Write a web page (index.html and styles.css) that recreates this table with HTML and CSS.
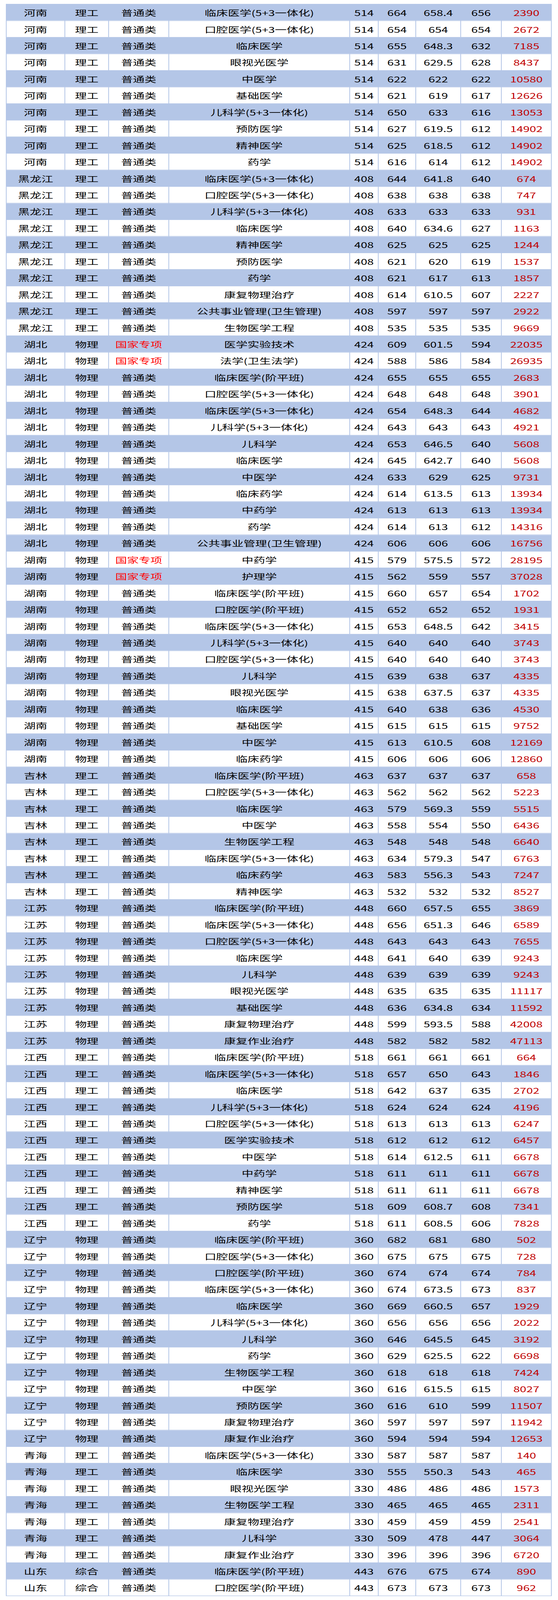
FILE: index.html
```html
<!DOCTYPE html>
<html lang="zh-CN">
<head>
<meta charset="utf-8">
<title>录取分数</title>
<link rel="stylesheet" href="styles.css">
</head>
<body>
<div class="frame">
<div class="page">
<table class="score-table">
<colgroup>
<col class="c-prov"><col class="c-type"><col class="c-cat"><col class="c-major"><col class="c-line"><col class="c-max"><col class="c-avg"><col class="c-min"><col class="c-rank">
</colgroup>
<tbody>
<tr><td>河南</td><td>理工</td><td>普通类</td><td>临床医学(5+3一体化)</td><td>514</td><td>664</td><td>658.4</td><td>656</td><td class="rank">2390</td></tr>
<tr><td>河南</td><td>理工</td><td>普通类</td><td>口腔医学(5+3一体化)</td><td>514</td><td>654</td><td>654</td><td>654</td><td class="rank">2672</td></tr>
<tr><td>河南</td><td>理工</td><td>普通类</td><td>临床医学</td><td>514</td><td>655</td><td>648.3</td><td>632</td><td class="rank">7185</td></tr>
<tr><td>河南</td><td>理工</td><td>普通类</td><td>眼视光医学</td><td>514</td><td>631</td><td>629.5</td><td>628</td><td class="rank">8437</td></tr>
<tr><td>河南</td><td>理工</td><td>普通类</td><td>中医学</td><td>514</td><td>622</td><td>622</td><td>622</td><td class="rank">10580</td></tr>
<tr><td>河南</td><td>理工</td><td>普通类</td><td>基础医学</td><td>514</td><td>621</td><td>619</td><td>617</td><td class="rank">12626</td></tr>
<tr><td>河南</td><td>理工</td><td>普通类</td><td>儿科学(5+3一体化)</td><td>514</td><td>650</td><td>633</td><td>616</td><td class="rank">13053</td></tr>
<tr><td>河南</td><td>理工</td><td>普通类</td><td>预防医学</td><td>514</td><td>627</td><td>619.5</td><td>612</td><td class="rank">14902</td></tr>
<tr><td>河南</td><td>理工</td><td>普通类</td><td>精神医学</td><td>514</td><td>625</td><td>618.5</td><td>612</td><td class="rank">14902</td></tr>
<tr><td>河南</td><td>理工</td><td>普通类</td><td>药学</td><td>514</td><td>616</td><td>614</td><td>612</td><td class="rank">14902</td></tr>
<tr><td>黑龙江</td><td>理工</td><td>普通类</td><td>临床医学(5+3一体化)</td><td>408</td><td>644</td><td>641.8</td><td>640</td><td class="rank">674</td></tr>
<tr><td>黑龙江</td><td>理工</td><td>普通类</td><td>口腔医学(5+3一体化)</td><td>408</td><td>638</td><td>638</td><td>638</td><td class="rank">747</td></tr>
<tr><td>黑龙江</td><td>理工</td><td>普通类</td><td>儿科学(5+3一体化)</td><td>408</td><td>633</td><td>633</td><td>633</td><td class="rank">931</td></tr>
<tr><td>黑龙江</td><td>理工</td><td>普通类</td><td>临床医学</td><td>408</td><td>640</td><td>634.6</td><td>627</td><td class="rank">1163</td></tr>
<tr><td>黑龙江</td><td>理工</td><td>普通类</td><td>精神医学</td><td>408</td><td>625</td><td>625</td><td>625</td><td class="rank">1244</td></tr>
<tr><td>黑龙江</td><td>理工</td><td>普通类</td><td>预防医学</td><td>408</td><td>621</td><td>620</td><td>619</td><td class="rank">1537</td></tr>
<tr><td>黑龙江</td><td>理工</td><td>普通类</td><td>药学</td><td>408</td><td>621</td><td>617</td><td>613</td><td class="rank">1857</td></tr>
<tr><td>黑龙江</td><td>理工</td><td>普通类</td><td>康复物理治疗</td><td>408</td><td>614</td><td>610.5</td><td>607</td><td class="rank">2227</td></tr>
<tr><td>黑龙江</td><td>理工</td><td>普通类</td><td>公共事业管理(卫生管理)</td><td>408</td><td>597</td><td>597</td><td>597</td><td class="rank">2922</td></tr>
<tr><td>黑龙江</td><td>理工</td><td>普通类</td><td>生物医学工程</td><td>408</td><td>535</td><td>535</td><td>535</td><td class="rank">9669</td></tr>
<tr><td>湖北</td><td>物理</td><td class="special">国家专项</td><td>医学实验技术</td><td>424</td><td>609</td><td>601.5</td><td>594</td><td class="rank">22035</td></tr>
<tr><td>湖北</td><td>物理</td><td class="special">国家专项</td><td>法学(卫生法学)</td><td>424</td><td>588</td><td>586</td><td>584</td><td class="rank">26935</td></tr>
<tr><td>湖北</td><td>物理</td><td>普通类</td><td>临床医学(阶平班)</td><td>424</td><td>655</td><td>655</td><td>655</td><td class="rank">2683</td></tr>
<tr><td>湖北</td><td>物理</td><td>普通类</td><td>口腔医学(5+3一体化)</td><td>424</td><td>648</td><td>648</td><td>648</td><td class="rank">3901</td></tr>
<tr><td>湖北</td><td>物理</td><td>普通类</td><td>临床医学(5+3一体化)</td><td>424</td><td>654</td><td>648.3</td><td>644</td><td class="rank">4682</td></tr>
<tr><td>湖北</td><td>物理</td><td>普通类</td><td>儿科学(5+3一体化)</td><td>424</td><td>643</td><td>643</td><td>643</td><td class="rank">4921</td></tr>
<tr><td>湖北</td><td>物理</td><td>普通类</td><td>儿科学</td><td>424</td><td>653</td><td>646.5</td><td>640</td><td class="rank">5608</td></tr>
<tr><td>湖北</td><td>物理</td><td>普通类</td><td>临床医学</td><td>424</td><td>645</td><td>642.7</td><td>640</td><td class="rank">5608</td></tr>
<tr><td>湖北</td><td>物理</td><td>普通类</td><td>中医学</td><td>424</td><td>633</td><td>629</td><td>625</td><td class="rank">9731</td></tr>
<tr><td>湖北</td><td>物理</td><td>普通类</td><td>临床药学</td><td>424</td><td>614</td><td>613.5</td><td>613</td><td class="rank">13934</td></tr>
<tr><td>湖北</td><td>物理</td><td>普通类</td><td>中药学</td><td>424</td><td>613</td><td>613</td><td>613</td><td class="rank">13934</td></tr>
<tr><td>湖北</td><td>物理</td><td>普通类</td><td>药学</td><td>424</td><td>614</td><td>613</td><td>612</td><td class="rank">14316</td></tr>
<tr><td>湖北</td><td>物理</td><td>普通类</td><td>公共事业管理(卫生管理)</td><td>424</td><td>606</td><td>606</td><td>606</td><td class="rank">16756</td></tr>
<tr><td>湖南</td><td>物理</td><td class="special">国家专项</td><td>中药学</td><td>415</td><td>579</td><td>575.5</td><td>572</td><td class="rank">28195</td></tr>
<tr><td>湖南</td><td>物理</td><td class="special">国家专项</td><td>护理学</td><td>415</td><td>562</td><td>559</td><td>557</td><td class="rank">37028</td></tr>
<tr><td>湖南</td><td>物理</td><td>普通类</td><td>临床医学(阶平班)</td><td>415</td><td>660</td><td>657</td><td>654</td><td class="rank">1702</td></tr>
<tr><td>湖南</td><td>物理</td><td>普通类</td><td>口腔医学(阶平班)</td><td>415</td><td>652</td><td>652</td><td>652</td><td class="rank">1931</td></tr>
<tr><td>湖南</td><td>物理</td><td>普通类</td><td>临床医学(5+3一体化)</td><td>415</td><td>653</td><td>648.5</td><td>642</td><td class="rank">3415</td></tr>
<tr><td>湖南</td><td>物理</td><td>普通类</td><td>儿科学(5+3一体化)</td><td>415</td><td>640</td><td>640</td><td>640</td><td class="rank">3743</td></tr>
<tr><td>湖南</td><td>物理</td><td>普通类</td><td>口腔医学(5+3一体化)</td><td>415</td><td>640</td><td>640</td><td>640</td><td class="rank">3743</td></tr>
<tr><td>湖南</td><td>物理</td><td>普通类</td><td>儿科学</td><td>415</td><td>639</td><td>638</td><td>637</td><td class="rank">4335</td></tr>
<tr><td>湖南</td><td>物理</td><td>普通类</td><td>眼视光医学</td><td>415</td><td>638</td><td>637.5</td><td>637</td><td class="rank">4335</td></tr>
<tr><td>湖南</td><td>物理</td><td>普通类</td><td>临床医学</td><td>415</td><td>640</td><td>638</td><td>636</td><td class="rank">4530</td></tr>
<tr><td>湖南</td><td>物理</td><td>普通类</td><td>基础医学</td><td>415</td><td>615</td><td>615</td><td>615</td><td class="rank">9752</td></tr>
<tr><td>湖南</td><td>物理</td><td>普通类</td><td>中医学</td><td>415</td><td>613</td><td>610.5</td><td>608</td><td class="rank">12169</td></tr>
<tr><td>湖南</td><td>物理</td><td>普通类</td><td>临床药学</td><td>415</td><td>606</td><td>606</td><td>606</td><td class="rank">12860</td></tr>
<tr><td>吉林</td><td>理工</td><td>普通类</td><td>临床医学(阶平班)</td><td>463</td><td>637</td><td>637</td><td>637</td><td class="rank">658</td></tr>
<tr><td>吉林</td><td>理工</td><td>普通类</td><td>口腔医学(5+3一体化)</td><td>463</td><td>562</td><td>562</td><td>562</td><td class="rank">5223</td></tr>
<tr><td>吉林</td><td>理工</td><td>普通类</td><td>临床医学</td><td>463</td><td>579</td><td>569.3</td><td>559</td><td class="rank">5515</td></tr>
<tr><td>吉林</td><td>理工</td><td>普通类</td><td>中医学</td><td>463</td><td>558</td><td>554</td><td>550</td><td class="rank">6436</td></tr>
<tr><td>吉林</td><td>理工</td><td>普通类</td><td>生物医学工程</td><td>463</td><td>548</td><td>548</td><td>548</td><td class="rank">6640</td></tr>
<tr><td>吉林</td><td>理工</td><td>普通类</td><td>临床医学(5+3一体化)</td><td>463</td><td>634</td><td>579.3</td><td>547</td><td class="rank">6763</td></tr>
<tr><td>吉林</td><td>理工</td><td>普通类</td><td>临床药学</td><td>463</td><td>583</td><td>556.3</td><td>543</td><td class="rank">7247</td></tr>
<tr><td>吉林</td><td>理工</td><td>普通类</td><td>精神医学</td><td>463</td><td>532</td><td>532</td><td>532</td><td class="rank">8527</td></tr>
<tr><td>江苏</td><td>物理</td><td>普通类</td><td>临床医学(阶平班)</td><td>448</td><td>660</td><td>657.5</td><td>655</td><td class="rank">3869</td></tr>
<tr><td>江苏</td><td>物理</td><td>普通类</td><td>临床医学(5+3一体化)</td><td>448</td><td>656</td><td>651.3</td><td>646</td><td class="rank">6589</td></tr>
<tr><td>江苏</td><td>物理</td><td>普通类</td><td>口腔医学(5+3一体化)</td><td>448</td><td>643</td><td>643</td><td>643</td><td class="rank">7655</td></tr>
<tr><td>江苏</td><td>物理</td><td>普通类</td><td>临床医学</td><td>448</td><td>641</td><td>640</td><td>639</td><td class="rank">9243</td></tr>
<tr><td>江苏</td><td>物理</td><td>普通类</td><td>儿科学</td><td>448</td><td>639</td><td>639</td><td>639</td><td class="rank">9243</td></tr>
<tr><td>江苏</td><td>物理</td><td>普通类</td><td>眼视光医学</td><td>448</td><td>635</td><td>635</td><td>635</td><td class="rank">11117</td></tr>
<tr><td>江苏</td><td>物理</td><td>普通类</td><td>基础医学</td><td>448</td><td>636</td><td>634.8</td><td>634</td><td class="rank">11592</td></tr>
<tr><td>江苏</td><td>物理</td><td>普通类</td><td>康复物理治疗</td><td>448</td><td>599</td><td>593.5</td><td>588</td><td class="rank">42008</td></tr>
<tr><td>江苏</td><td>物理</td><td>普通类</td><td>康复作业治疗</td><td>448</td><td>582</td><td>582</td><td>582</td><td class="rank">47113</td></tr>
<tr><td>江西</td><td>理工</td><td>普通类</td><td>临床医学(阶平班)</td><td>518</td><td>661</td><td>661</td><td>661</td><td class="rank">664</td></tr>
<tr><td>江西</td><td>理工</td><td>普通类</td><td>临床医学(5+3一体化)</td><td>518</td><td>657</td><td>650</td><td>643</td><td class="rank">1846</td></tr>
<tr><td>江西</td><td>理工</td><td>普通类</td><td>临床医学</td><td>518</td><td>642</td><td>637</td><td>635</td><td class="rank">2702</td></tr>
<tr><td>江西</td><td>理工</td><td>普通类</td><td>儿科学(5+3一体化)</td><td>518</td><td>624</td><td>624</td><td>624</td><td class="rank">4196</td></tr>
<tr><td>江西</td><td>理工</td><td>普通类</td><td>口腔医学(5+3一体化)</td><td>518</td><td>613</td><td>613</td><td>613</td><td class="rank">6247</td></tr>
<tr><td>江西</td><td>理工</td><td>普通类</td><td>医学实验技术</td><td>518</td><td>612</td><td>612</td><td>612</td><td class="rank">6457</td></tr>
<tr><td>江西</td><td>理工</td><td>普通类</td><td>中医学</td><td>518</td><td>614</td><td>612.5</td><td>611</td><td class="rank">6678</td></tr>
<tr><td>江西</td><td>理工</td><td>普通类</td><td>中药学</td><td>518</td><td>611</td><td>611</td><td>611</td><td class="rank">6678</td></tr>
<tr><td>江西</td><td>理工</td><td>普通类</td><td>精神医学</td><td>518</td><td>611</td><td>611</td><td>611</td><td class="rank">6678</td></tr>
<tr><td>江西</td><td>理工</td><td>普通类</td><td>预防医学</td><td>518</td><td>609</td><td>608.7</td><td>608</td><td class="rank">7341</td></tr>
<tr><td>江西</td><td>理工</td><td>普通类</td><td>药学</td><td>518</td><td>611</td><td>608.5</td><td>606</td><td class="rank">7828</td></tr>
<tr><td>辽宁</td><td>物理</td><td>普通类</td><td>临床医学(阶平班)</td><td>360</td><td>682</td><td>681</td><td>680</td><td class="rank">502</td></tr>
<tr><td>辽宁</td><td>物理</td><td>普通类</td><td>口腔医学(5+3一体化)</td><td>360</td><td>675</td><td>675</td><td>675</td><td class="rank">728</td></tr>
<tr><td>辽宁</td><td>物理</td><td>普通类</td><td>口腔医学(阶平班)</td><td>360</td><td>674</td><td>674</td><td>674</td><td class="rank">784</td></tr>
<tr><td>辽宁</td><td>物理</td><td>普通类</td><td>临床医学(5+3一体化)</td><td>360</td><td>674</td><td>673.5</td><td>673</td><td class="rank">837</td></tr>
<tr><td>辽宁</td><td>物理</td><td>普通类</td><td>临床医学</td><td>360</td><td>669</td><td>660.5</td><td>657</td><td class="rank">1929</td></tr>
<tr><td>辽宁</td><td>物理</td><td>普通类</td><td>儿科学(5+3一体化)</td><td>360</td><td>656</td><td>656</td><td>656</td><td class="rank">2022</td></tr>
<tr><td>辽宁</td><td>物理</td><td>普通类</td><td>儿科学</td><td>360</td><td>646</td><td>645.5</td><td>645</td><td class="rank">3192</td></tr>
<tr><td>辽宁</td><td>物理</td><td>普通类</td><td>药学</td><td>360</td><td>629</td><td>625.5</td><td>622</td><td class="rank">6698</td></tr>
<tr><td>辽宁</td><td>物理</td><td>普通类</td><td>生物医学工程</td><td>360</td><td>618</td><td>618</td><td>618</td><td class="rank">7424</td></tr>
<tr><td>辽宁</td><td>物理</td><td>普通类</td><td>中医学</td><td>360</td><td>616</td><td>615.5</td><td>615</td><td class="rank">8027</td></tr>
<tr><td>辽宁</td><td>物理</td><td>普通类</td><td>预防医学</td><td>360</td><td>616</td><td>610</td><td>599</td><td class="rank">11507</td></tr>
<tr><td>辽宁</td><td>物理</td><td>普通类</td><td>康复物理治疗</td><td>360</td><td>597</td><td>597</td><td>597</td><td class="rank">11942</td></tr>
<tr><td>辽宁</td><td>物理</td><td>普通类</td><td>康复作业治疗</td><td>360</td><td>594</td><td>594</td><td>594</td><td class="rank">12653</td></tr>
<tr><td>青海</td><td>理工</td><td>普通类</td><td>临床医学(5+3一体化)</td><td>330</td><td>587</td><td>587</td><td>587</td><td class="rank">140</td></tr>
<tr><td>青海</td><td>理工</td><td>普通类</td><td>临床医学</td><td>330</td><td>555</td><td>550.3</td><td>543</td><td class="rank">465</td></tr>
<tr><td>青海</td><td>理工</td><td>普通类</td><td>眼视光医学</td><td>330</td><td>486</td><td>486</td><td>486</td><td class="rank">1573</td></tr>
<tr><td>青海</td><td>理工</td><td>普通类</td><td>生物医学工程</td><td>330</td><td>465</td><td>465</td><td>465</td><td class="rank">2311</td></tr>
<tr><td>青海</td><td>理工</td><td>普通类</td><td>康复物理治疗</td><td>330</td><td>459</td><td>459</td><td>459</td><td class="rank">2541</td></tr>
<tr><td>青海</td><td>理工</td><td>普通类</td><td>儿科学</td><td>330</td><td>509</td><td>478</td><td>447</td><td class="rank">3064</td></tr>
<tr><td>青海</td><td>理工</td><td>普通类</td><td>康复作业治疗</td><td>330</td><td>396</td><td>396</td><td>396</td><td class="rank">6720</td></tr>
<tr><td>山东</td><td>综合</td><td>普通类</td><td>临床医学(阶平班)</td><td>443</td><td>676</td><td>675</td><td>674</td><td class="rank">890</td></tr>
<tr><td>山东</td><td>综合</td><td>普通类</td><td>口腔医学(阶平班)</td><td>443</td><td>673</td><td>673</td><td>673</td><td class="rank">962</td></tr>
</tbody>
</table>
</div>
</div>
</body>
</html>
```

FILE: styles.css
```css
html, body {
  margin: 0;
  padding: 0;
  background: #ffffff;
}

body {
  font-family: "Noto Sans CJK SC", "Noto Sans", sans-serif;
  color: #000000;
}

/* the capture is 4096px tall: the 6176px page is drawn at 4096/6176 vertically */
.frame {
  height: 4096px;
  overflow: hidden;
}

.page {
  padding: 15px 0 15px 15px;
  transform: scaleY(0.66321);
  transform-origin: 0 0;
}

.score-table {
  border-collapse: collapse;
  table-layout: fixed;
  width: 1395px;
}

.c-prov { width: 150px; }
.c-type { width: 112px; }
.c-cat { width: 154px; }
.c-major { width: 463px; }
.c-line { width: 73px; }
.c-max { width: 96px; }
.c-avg { width: 115px; }
.c-min { width: 104px; }
.c-rank { width: 128px; }

.score-table tr {
  height: 64px;
}

.score-table td {
  border: 2px solid #b4c6e7;
  padding: 2px 0 0;
  text-align: center;
  vertical-align: middle;
  font-size: 30px;
  line-height: 1;
  white-space: nowrap;
  overflow: hidden;
  background: #ffffff;
}

.score-table tr:nth-child(odd) td {
  background: #b4c6e7;
}

.score-table td.rank {
  color: #c00000;
}

.score-table td.special {
  color: #ff0000;
}
```
